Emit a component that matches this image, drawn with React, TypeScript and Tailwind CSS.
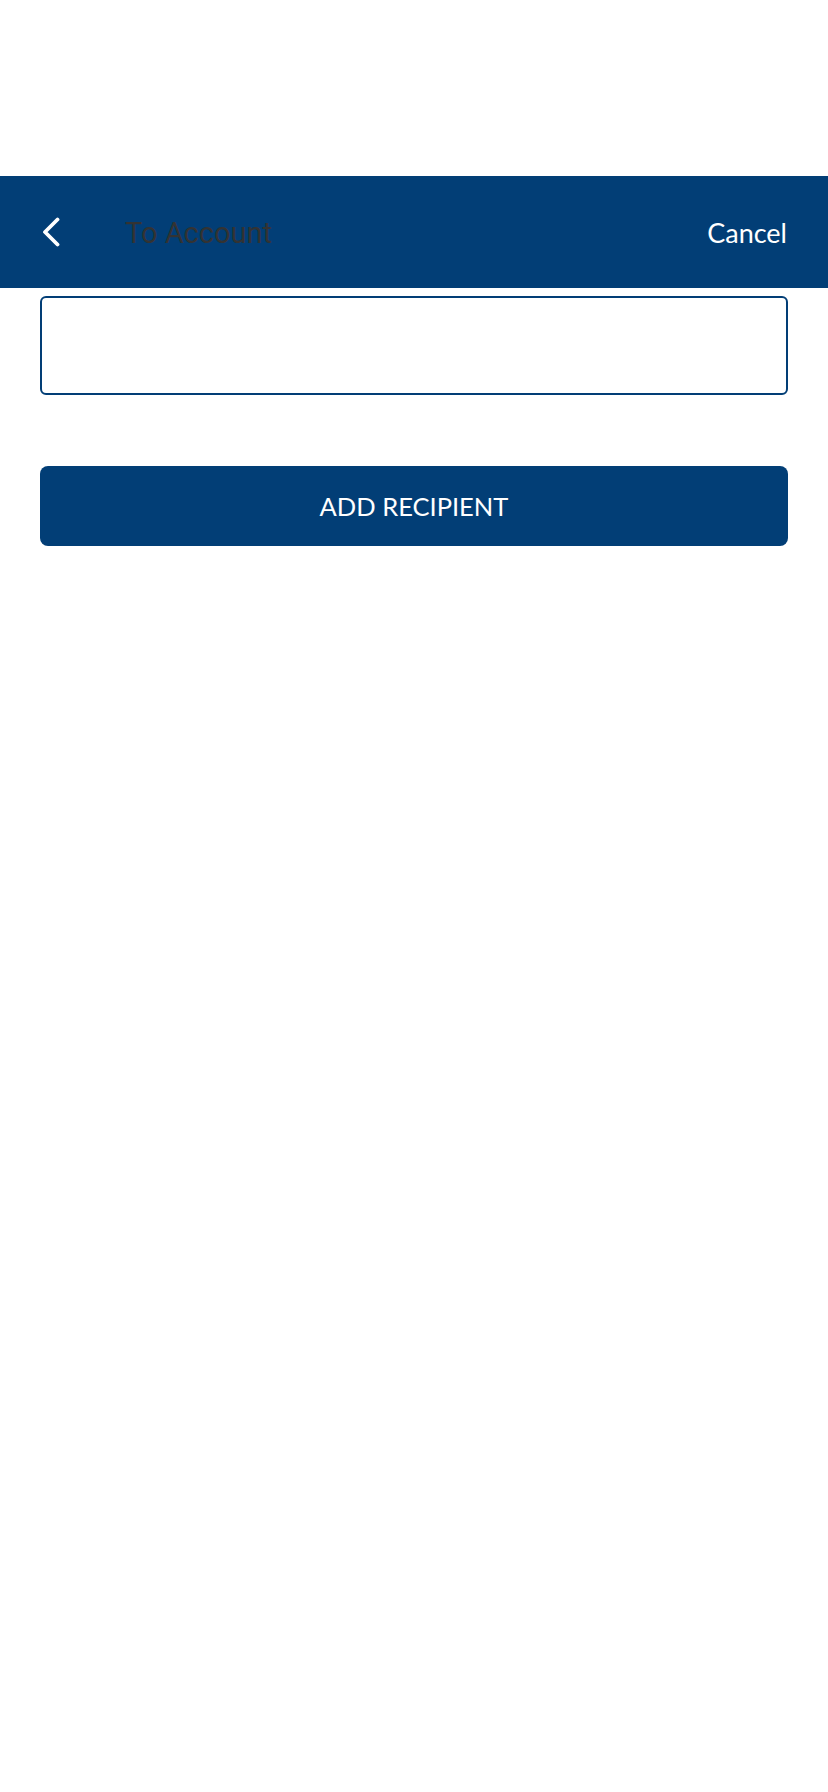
import React from "react";

export default function App() {
  return (
    <div className="min-h-[1792px] w-full bg-white">
      <div className="h-[176px]" />
      <header className="flex h-[112px] items-center bg-[#023e76] pl-[42px] pr-[41px]">
        <svg width="18" height="30" viewBox="0 0 18 30" className="shrink-0">
          <path d="M15.5 2.5 L3 15 L15.5 27.5" fill="none" stroke="white" strokeWidth="3.8" strokeLinecap="round" strokeLinejoin="round" />
        </svg>
        <div className="ml-[65px] mt-[2px] flex-1 text-[29px] leading-none text-[#333333] [font-family:Roboto,sans-serif]">To Account</div>
        <div className="text-[27px] leading-none text-white [font-family:Lato,sans-serif]">Cancel</div>
      </header>
      <div className="px-10 pt-2">
        <div className="h-[99px] rounded-[6px] border-2 border-[#023e76] bg-white" />
        <button className="mt-[71px] flex h-[80px] w-full items-center justify-center rounded-[8px] bg-[#023e76] text-[25.5px] text-white [font-family:Lato,sans-serif]">
          ADD RECIPIENT
        </button>
      </div>
    </div>
  );
}
